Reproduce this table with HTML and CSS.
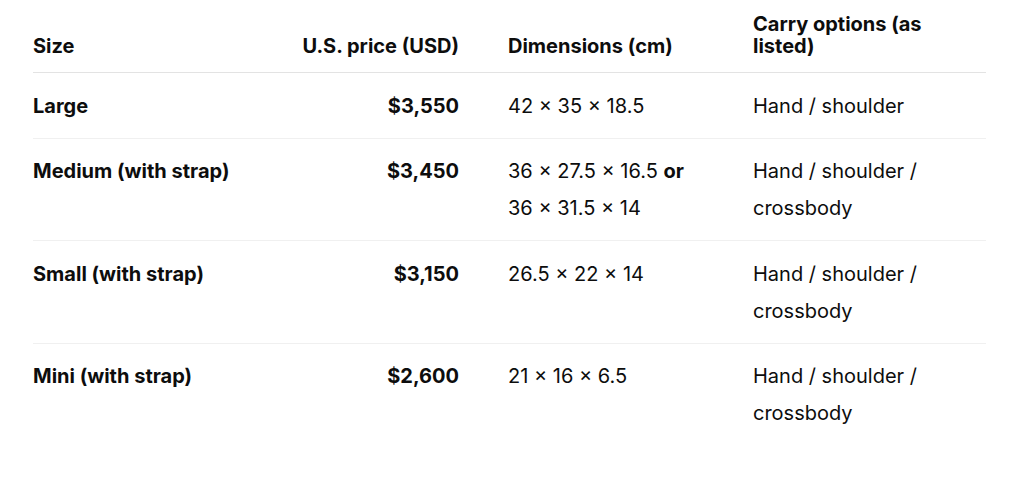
FILE: index.html
```html
<!DOCTYPE html>
<html lang="en">
<head>
    <meta charset="UTF-8">
    <meta name="viewport" content="width=device-width, initial-scale=1.0">
    <title>Bag sizes</title>
    <link rel="stylesheet" href="styles.css">
</head>
<body>

    <table class="sizes">
        <colgroup>
            <col class="col-size">
            <col class="col-price">
            <col class="col-dims">
            <col class="col-carry">
        </colgroup>
        <thead>
            <tr>
                <th>Size</th>
                <th class="num">U.S. price (USD)</th>
                <th>Dimensions (cm)</th>
                <th>Carry options (as listed)</th>
            </tr>
        </thead>
        <tbody>
            <tr>
                <td class="name">Large</td>
                <td class="num">$3,550</td>
                <td>42 × 35 × 18.5</td>
                <td>Hand / shoulder</td>
            </tr>
            <tr>
                <td class="name">Medium (with strap)</td>
                <td class="num">$3,450</td>
                <td>36 × 27.5 × 16.5 <b>or</b> 36 × 31.5 × 14</td>
                <td>Hand / shoulder / crossbody</td>
            </tr>
            <tr>
                <td class="name">Small (with strap)</td>
                <td class="num">$3,150</td>
                <td>26.5 × 22 × 14</td>
                <td>Hand / shoulder / crossbody</td>
            </tr>
            <tr>
                <td class="name">Mini (with strap)</td>
                <td class="num">$2,600</td>
                <td>21 × 16 × 6.5</td>
                <td>Hand / shoulder / crossbody</td>
            </tr>
        </tbody>
    </table>

</body>
</html>
```

FILE: styles.css
```css
body {
    margin: 0;
    padding: 0 38px 0 33px;
    background-color: #fff;
    color: #0d0d0d;
    font-family: Inter, "Liberation Sans", sans-serif;
    font-size: 20px;
}

.sizes {
    width: 953px;
    border-collapse: collapse;
    table-layout: fixed;
}

.col-size { width: 240px; }
.col-price { width: 211px; }
.col-dims { width: 245px; }
.col-carry { width: 257px; }

.sizes th,
.sizes td {
    padding: 14.5px 24px 13px;
    text-align: left;
    vertical-align: top;
}

.sizes th:first-child,
.sizes td:first-child {
    padding-left: 0;
    padding-right: 8px;
}

.sizes th:nth-child(2),
.sizes td:nth-child(2) {
    padding-left: 8px;
    padding-right: 25px;
}

.sizes th:last-child,
.sizes td:last-child {
    padding-right: 52px;
}

.sizes th {
    padding-top: 13px;
    padding-bottom: 15px;
    font-weight: 700;
    line-height: 22px;
    vertical-align: bottom;
    border-bottom: 1px solid #e3e3e3;
}

.sizes td {
    line-height: 37px;
    border-bottom: 1px solid #f0f0f0;
}

.sizes tbody tr:last-child td {
    border-bottom: none;
}

.sizes .num {
    text-align: right;
}

.sizes .name,
.sizes td.num,
.sizes b {
    font-weight: 700;
}
```
